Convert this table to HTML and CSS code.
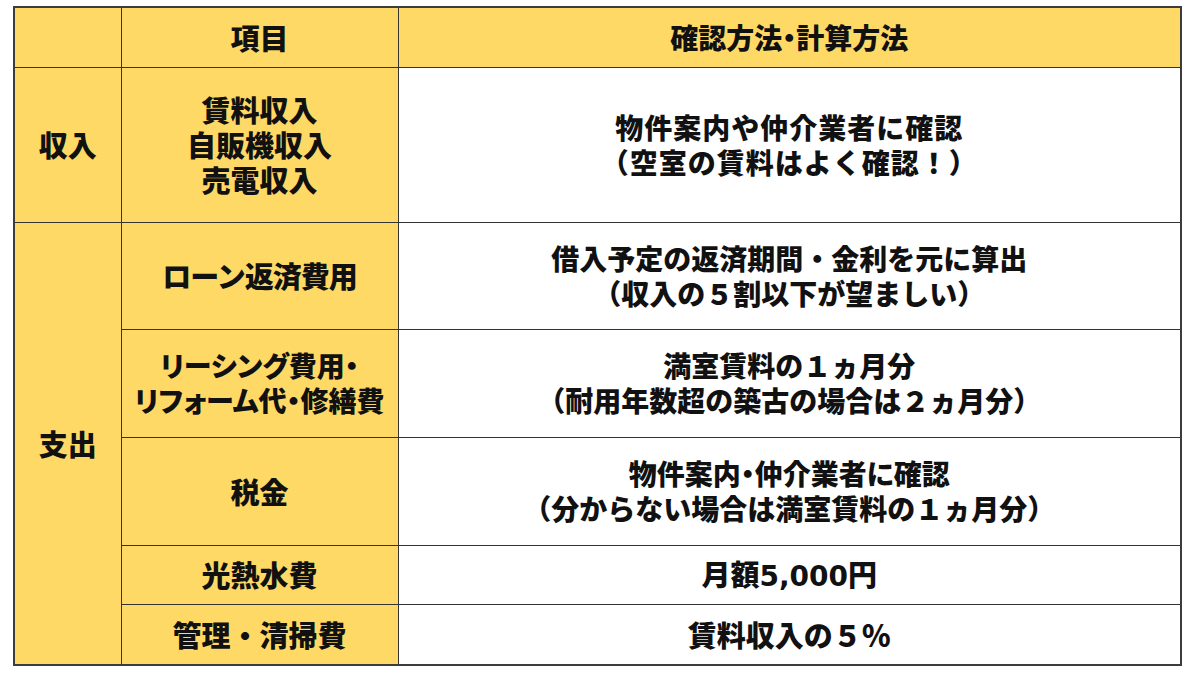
FILE: index.html
```html
<!DOCTYPE html>
<html lang="ja">
<head>
<meta charset="utf-8">
<title>収支の確認方法</title>
<link rel="stylesheet" href="styles.css">
</head>
<body>
<table class="sheet">
  <colgroup>
    <col class="c1"><col class="c2"><col class="c3">
  </colgroup>
  <tr class="row-head">
    <th class="cat"></th>
    <th class="item">項目</th>
    <th class="head-main prop">確認方法・計算方法</th>
  </tr>
  <tr class="row-income">
    <th class="cat">収入</th>
    <th class="item">賃料収入<br>自販機収入<br>売電収入</th>
    <td class="desc wide">物件案内や仲介業者に確認<br>（空室の賃料はよく確認！）</td>
  </tr>
  <tr class="row-loan">
    <th class="cat" rowspan="5">支出</th>
    <th class="item kana">ローン返済費用</th>
    <td class="desc">借入予定の返済期間・金利を元に算出<br>（収入の５割以下が望ましい）</td>
  </tr>
  <tr class="row-leasing">
    <th class="item prop small">リーシング費用・<br>リフォーム代・修繕費</th>
    <td class="desc">満室賃料の１ヵ月分<br>（耐用年数超の築古の場合は２ヵ月分）</td>
  </tr>
  <tr class="row-tax">
    <th class="item">税金</th>
    <td class="desc"><span class="prop">物件案内・仲介業者に確認</span><br>（分からない場合は満室賃料の１ヵ月分）</td>
  </tr>
  <tr class="row-util">
    <th class="item">光熱水費</th>
    <td class="desc big">月額<span class="num">5,000</span>円</td>
  </tr>
  <tr class="row-mgmt">
    <th class="item">管理・清掃費</th>
    <td class="desc big">賃料収入の５％</td>
  </tr>
</table>
</body>
</html>
```
FILE: styles.css
```css
html, body {
  margin: 0;
  padding: 0;
  background: #ffffff;
}
body {
  padding: 6px 0 0 13px;
  font-family: "Noto Sans CJK JP", "Noto Sans", sans-serif;
  font-weight: 900;
  color: #111111;
}
.sheet {
  border-collapse: collapse;
  table-layout: fixed;
  width: 1167px;
  border: 2px solid #3c3c3c;
}
.c1 { width: 107px; }
.c2 { width: 277px; }
.c3 { width: 783px; }
.sheet th,
.sheet td {
  border: 1px solid #333333;
  padding: 0;
  text-align: center;
  vertical-align: middle;
  font-size: 29px;
  line-height: 35px;
  font-weight: 900;
}
.sheet th {
  background: #ffd966;
}
.sheet td {
  background: #ffffff;
}
.sheet .head-main {
  background: #ffd966;
  font-size: 28px;
}
.sheet .desc {
  font-size: 28px;
}
.sheet .desc.wide {
  letter-spacing: 1px;
}
.sheet .desc.big {
  font-size: 29px;
}
.sheet .small {
  font-size: 28px;
}
.prop {
  font-feature-settings: "palt";
}
.kana {
  letter-spacing: -1px;
}
.num {
  font-family: "DejaVu Sans", "Noto Sans", sans-serif;
  font-weight: 700;
  font-size: 28px;
}
.row-head { height: 60px; }
.row-income { height: 155px; }
.row-loan { height: 107px; }
.row-leasing { height: 108px; }
.row-tax { height: 108px; }
.row-util { height: 59px; }
.row-mgmt { height: 61px; }
```
